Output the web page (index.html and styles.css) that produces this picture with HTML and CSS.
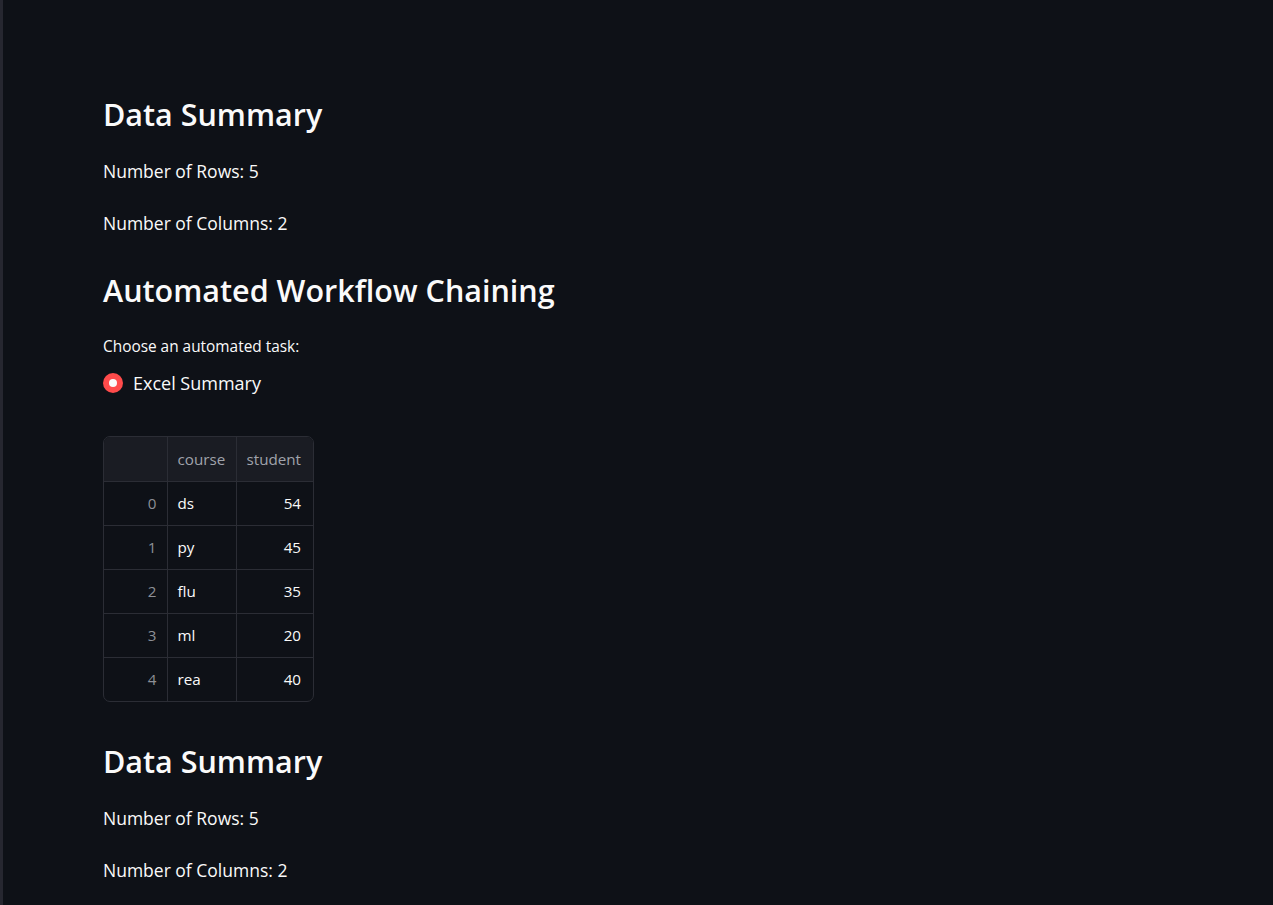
FILE: index.html
```html
<!DOCTYPE html>
<html>
<head>
<meta charset="utf-8">
<link rel="stylesheet" href="styles.css">
</head>
<body>
<div class="app">
  <div class="edge"></div>
  <main class="main">
    <h2 class="h first">Data Summary</h2>
    <p class="txt t1">Number of Rows: 5</p>
    <p class="txt t2">Number of Columns: 2</p>
    <h2 class="h h2b">Automated Workflow Chaining</h2>
    <div class="label">Choose an automated task:</div>
    <div class="radio"><span class="dot"></span><span class="rlabel">Excel Summary</span></div>
    <div class="tablewrap">
      <table class="df">
        <thead>
          <tr><th class="idx"></th><th class="c1">course</th><th class="c2">student</th></tr>
        </thead>
        <tbody>
          <tr><td class="idx">0</td><td class="c1">ds</td><td class="c2">54</td></tr>
          <tr><td class="idx">1</td><td class="c1">py</td><td class="c2">45</td></tr>
          <tr><td class="idx">2</td><td class="c1">flu</td><td class="c2">35</td></tr>
          <tr><td class="idx">3</td><td class="c1">ml</td><td class="c2">20</td></tr>
          <tr><td class="idx">4</td><td class="c1">rea</td><td class="c2">40</td></tr>
        </tbody>
      </table>
    </div>
    <h2 class="h h2c">Data Summary</h2>
    <p class="txt t1">Number of Rows: 5</p>
    <p class="txt t2">Number of Columns: 2</p>
  </main>
</div>
</body>
</html>
```
FILE: styles.css
```css
html, body {
  margin: 0;
  padding: 0;
  height: 100%;
  background: #0e1117;
  overflow: hidden;
}
body {
  font-family: "Open Sans", "Noto Sans", sans-serif;
  color: #fafafa;
}
.app {
  display: flex;
  height: 905px;
}
.edge {
  width: 3px;
  background: #262730;
  flex: none;
}
.main {
  flex: 1;
  padding: 92px 0 0 100px;
}
.h {
  font-size: 30.5px;
  font-weight: 600;
  line-height: 44px;
  margin: 0;
}
.txt {
  font-size: 17.5px;
  line-height: 26px;
  margin: 0;
}
.t1 { margin-top: 22px; }
.t2 { margin-top: 26px; }
.h2b { margin-top: 32px; }
.label {
  font-size: 15.4px;
  line-height: 20px;
  margin-top: 25px;
}
.radio {
  display: flex;
  align-items: center;
  gap: 10px;
  margin-top: 16px;
  height: 20px;
}
.dot {
  width: 20px;
  height: 20px;
  border-radius: 50%;
  background: #ff4b4b;
  display: flex;
  align-items: center;
  justify-content: center;
  flex: none;
}
.dot::after {
  content: "";
  width: 8px;
  height: 8px;
  border-radius: 50%;
  background: #fafafa;
}
.rlabel {
  font-size: 18px;
  line-height: 20px;
}
.tablewrap {
  margin-top: 43px;
  display: inline-block;
  border: 1px solid #2b2d35;
  border-radius: 7px;
  overflow: hidden;
}
.df {
  border-collapse: collapse;
  font-size: 15.2px;
}
.df th, .df td {
  border-left: 1px solid #2b2d35;
  border-top: 1px solid #2b2d35;
  padding: 0;
  box-sizing: border-box;
}
.df tr > :first-child { border-left: none; }
.df thead th { border-top: none; height: 44px; background: #1a1c23; color: #a0a3ab; font-weight: 400; }
.df tbody td { height: 44px; }
.idx { width: 63px; text-align: right; padding-right: 10px !important; color: #8d8f96; }
.df thead .idx { background: #1a1c23; }
.c1 { width: 69px; text-align: left; padding-left: 10px !important; }
.c2 { width: 77px; text-align: right; padding-right: 12px !important; }
.h2c { margin-top: 32px; }
.h2c + .t1 { margin-top: 22px; }
```
